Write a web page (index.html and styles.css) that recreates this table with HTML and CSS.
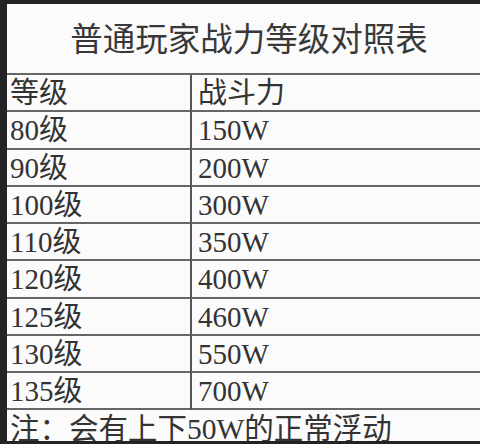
FILE: index.html
```html
<!DOCTYPE html>
<html lang="zh">
<head>
<meta charset="utf-8">
<link rel="stylesheet" href="styles.css">
</head>
<body>
<div class="sheet">
  <div class="title">普通玩家战力等级对照表</div>
  <div class="table">
    <div class="row"><div class="cell lv">等级</div><div class="cell pw">战斗力</div></div>
    <div class="row"><div class="cell lv">80级</div><div class="cell pw">150W</div></div>
    <div class="row"><div class="cell lv">90级</div><div class="cell pw">200W</div></div>
    <div class="row"><div class="cell lv">100级</div><div class="cell pw">300W</div></div>
    <div class="row"><div class="cell lv">110级</div><div class="cell pw">350W</div></div>
    <div class="row"><div class="cell lv">120级</div><div class="cell pw">400W</div></div>
    <div class="row"><div class="cell lv">125级</div><div class="cell pw">460W</div></div>
    <div class="row"><div class="cell lv">130级</div><div class="cell pw">550W</div></div>
    <div class="row"><div class="cell lv">135级</div><div class="cell pw">700W</div></div>
  </div>
  <div class="note">注：会有上下50W的正常浮动</div>
</div>
</body>
</html>
```
FILE: styles.css
```css
html, body {
  margin: 0;
  padding: 0;
  background: #232323;
  width: 480px;
  height: 444px;
  overflow: hidden;
}
.sheet {
  margin: 4px 0 0 7px;
  height: 437px;
  background: #fbfbfb;
  overflow: hidden;
  font-family: "Liberation Serif", "Noto Sans CJK SC", serif;
  color: #333;
}
.title {
  height: 69px;
  border-bottom: 2px solid #666;
  font-family: "Noto Sans CJK SC", sans-serif;
  font-size: 32.5px;
  line-height: 66px;
  text-align: center;
  padding-left: 11px;
  color: #383838;
}
.row {
  display: grid;
  grid-template-columns: 185px 1fr;
  height: 37.25px;
  box-sizing: border-box;
  border-bottom: 2px solid #666;
}
.cell {
  font-size: 29px;
  line-height: 37px;
  white-space: nowrap;
}
.lv {
  padding-left: 3px;
  border-right: 2px solid #555;
}
.pw {
  padding-left: 6px;
}
.note {
  font-size: 29.5px;
  line-height: 38px;
  padding-left: 3px;
  white-space: nowrap;
}
```
